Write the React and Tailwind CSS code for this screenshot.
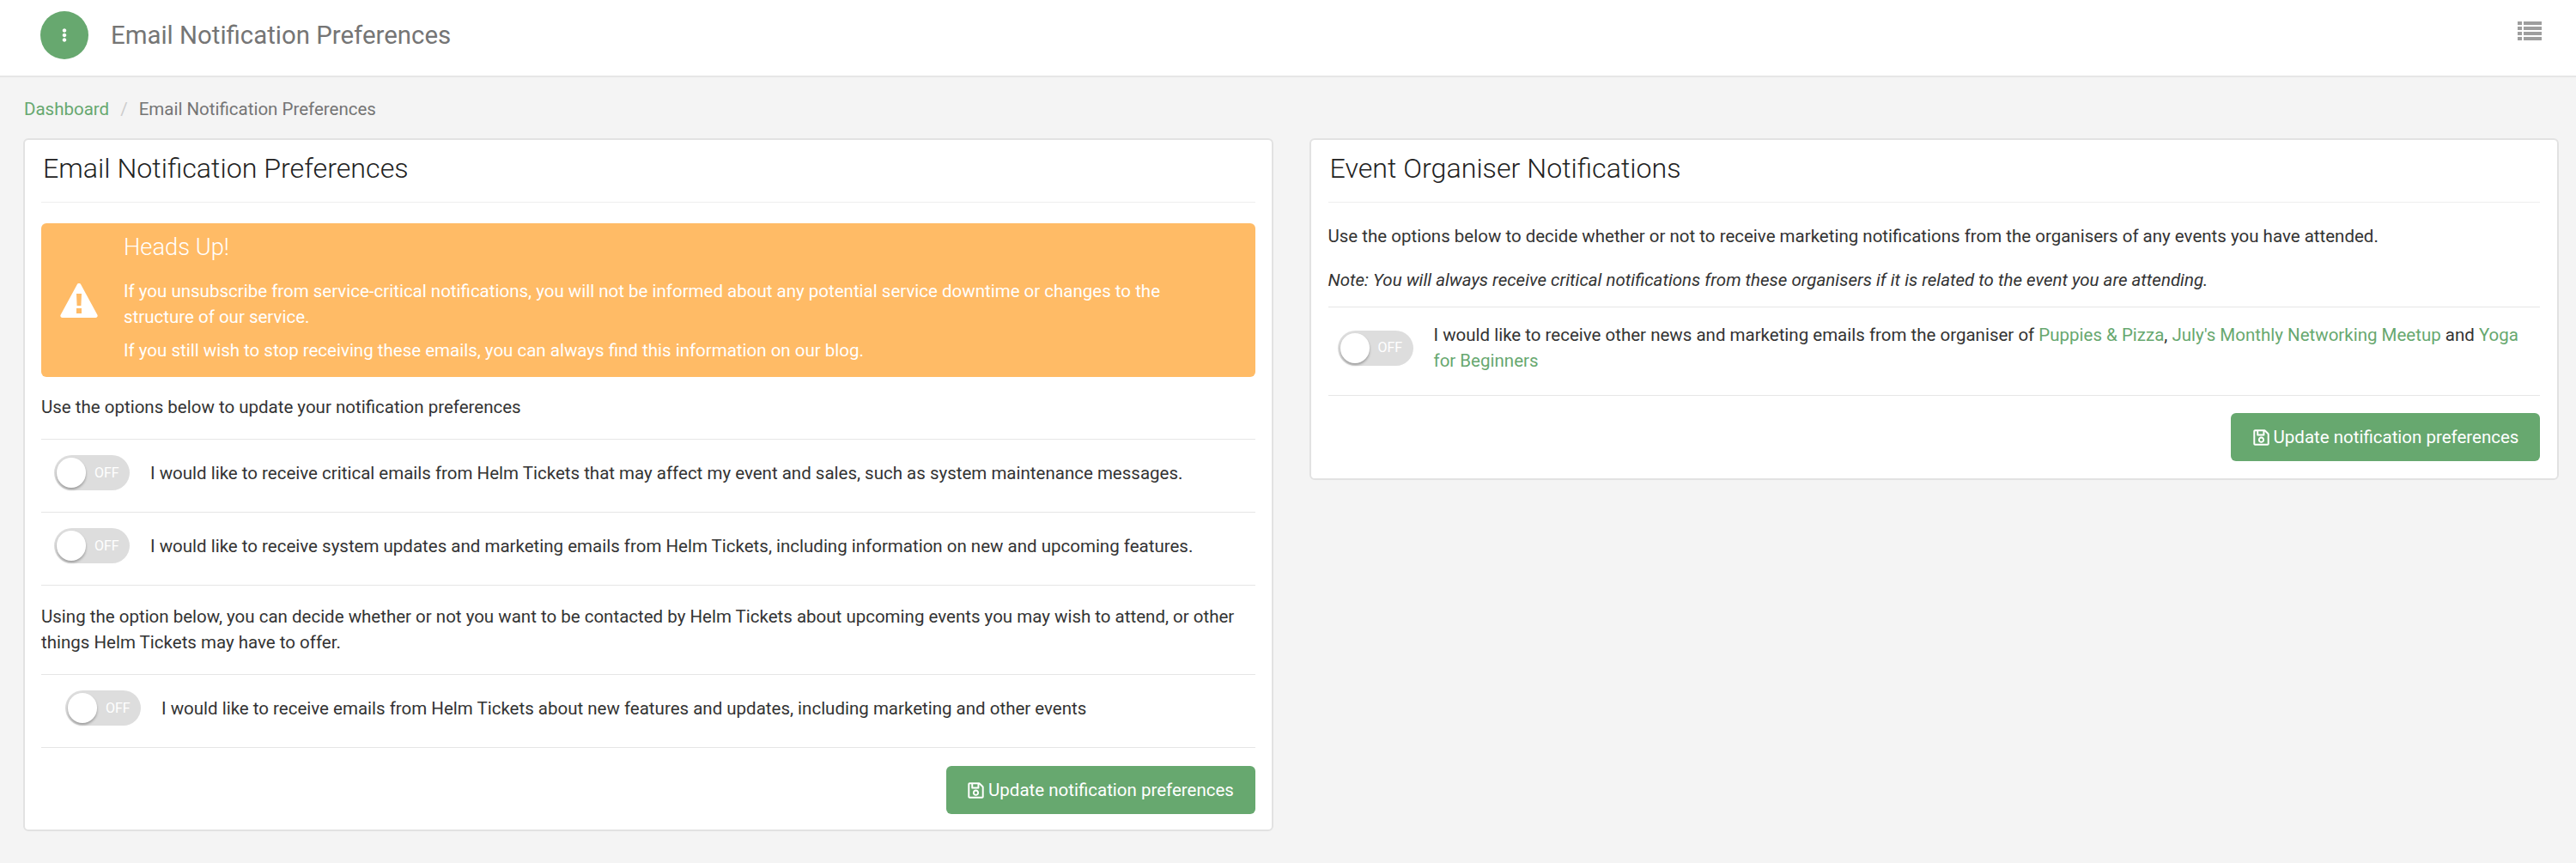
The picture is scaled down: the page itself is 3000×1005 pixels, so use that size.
import React from 'react';
import { FaRegSave, FaEllipsisV } from 'react-icons/fa';

function Toggle() {
  return (
    <div className="relative flex h-[41px] w-[88px] shrink-0 items-center rounded-full bg-[#dddddd]">
      <div className="absolute top-[3px] left-[3px] h-[35px] w-[34px] rounded-full bg-white shadow-[0_2px_3px_rgba(0,0,0,0.3)]" />
      <span className="ml-[47px] text-[16px] leading-none text-white">OFF</span>
    </div>
  );
}

function SaveButton() {
  return (
    <div className="flex justify-end">
      <button className="flex h-[56px] w-[360px] items-center justify-center gap-[4px] rounded-[6px] bg-[#67a86f] text-[20.5px] text-white">
        <FaRegSave className="h-[21px] w-[21px]" />
        Update notification preferences
      </button>
    </div>
  );
}

function PanelTitle({ children }) {
  return (
    <div className="mb-[24px] border-b border-[#eeeeee] pt-[2px] pb-[20px] pl-[2px]">
      <h2 className="text-[32.2px] leading-[38px] font-light text-[#222222]">{children}</h2>
    </div>
  );
}

function ToggleRow({ children, indent }) {
  return (
    <div className={`flex h-[85px] items-center gap-[24px] border-b border-[#e6e6e6] pb-[7px] ${indent ? 'pl-[28px]' : 'pl-[15px]'}`}>
      <Toggle />
      <p>{children}</p>
    </div>
  );
}

function Link({ children }) {
  return <a className="text-[#67a86f]">{children}</a>;
}

export default function App() {
  return (
    <div className="min-h-[1005px] bg-[#f4f4f4] text-[20.5px] leading-[30px] text-[#333333]" style={{ fontFamily: 'Roboto, sans-serif' }}>
      <header className="flex h-[90px] items-center justify-between border-b-2 border-[#e6e6e6] bg-white pr-[40px] pb-[6px] pl-[47px]">
        <div className="flex items-center gap-[26px]">
          <div className="flex h-[56px] w-[56px] items-center justify-center rounded-full bg-[#67a86f] text-white">
            <FaEllipsisV className="h-[16px] w-[16px]" />
          </div>
          <h1 className="text-[29.4px] font-normal text-[#757575]">Email Notification Preferences</h1>
        </div>
        <svg viewBox="0 0 28 22" className="mb-[10px] h-[22px] w-[28px]" fill="#9e9e9e">
          <rect x="0" y="0" width="5" height="4" />
          <rect x="7" y="0" width="21" height="4" />
          <rect x="0" y="6" width="5" height="4" />
          <rect x="7" y="6" width="21" height="4" />
          <rect x="0" y="12" width="5" height="4" />
          <rect x="7" y="12" width="21" height="4" />
          <rect x="0" y="18" width="5" height="4" />
          <rect x="7" y="18" width="21" height="4" />
        </svg>
      </header>

      <nav className="flex h-[71px] items-center pt-[3px] pl-[28px] text-[#757575]">
        <a className="text-[#67a86f]">Dashboard</a>
        <span className="mx-[13px] text-[#cccccc]">/</span>
        <span>Email Notification Preferences</span>
      </nav>

      <div className="grid grid-cols-2 items-start gap-[42px] pr-[20px] pl-[27px]">
        <section className="rounded-[6px] border-2 border-[#e2e2e2] bg-white px-[19px] pt-[12px] pb-[18px]">
          <PanelTitle>Email Notification Preferences</PanelTitle>
          <div className="flex h-[179px] items-center rounded-[6px] bg-[#ffbb66] pl-[22px] text-white">
            <svg viewBox="0 0 44 40" className="h-[40px] w-[44px] shrink-0" fill="currentColor">
              <path fillRule="evenodd" d="M22 0c1 0 1.8.5 2.3 1.4l19 35c1 1.800 0 3.600-2 3.600H2.700c-2 0-3-1.800-2-3.600l19-35C20.200.5 21 0 22 0ZM19 12l.6 14h4.800l.6-14h-6Zm0 17v6h6v-6h-6Z" />
            </svg>
            <div className="mb-[3px] ml-[30px] self-start pt-[13px]">
              <h4 className="mb-[21px] text-[27.3px] leading-[30px] font-light">Heads Up!</h4>
              <p>If you unsubscribe from service-critical notifications, you will not be informed about any potential service downtime or changes to the<br />structure of our service.</p>
              <p className="mt-[9px]">If you still wish to stop receiving these emails, you can always find this information on our blog.</p>
            </div>
          </div>
          <p className="mt-[20px] mb-[22px]">Use the options below to update your notification preferences</p>
          <div className="border-t border-[#e6e6e6]">
            <ToggleRow>I would like to receive critical emails from Helm Tickets that may affect my event and sales, such as system maintenance messages.</ToggleRow>
            <ToggleRow>I would like to receive system updates and marketing emails from Helm Tickets, including information on new and upcoming features.</ToggleRow>
          </div>
          <p className="pt-[21px] pb-[22px]">Using the option below, you can decide whether or not you want to be contacted by Helm Tickets about upcoming events you may wish to attend, or other things Helm Tickets may have to offer.</p>
          <div className="border-t border-[#e6e6e6]">
            <ToggleRow indent>I would like to receive emails from Helm Tickets about new features and updates, including marketing and other events</ToggleRow>
          </div>
          <div className="mt-[21px]">
            <SaveButton />
          </div>
        </section>

        <section className="rounded-[6px] border-2 border-[#e2e2e2] bg-white px-[20px] pt-[12px] pb-[20px]">
          <PanelTitle>Event Organiser Notifications</PanelTitle>
          <p>Use the options below to decide whether or not to receive marketing notifications from the organisers of any events you have attended.</p>
          <p className="mt-[21px] mb-[16px] italic">Note: You will always receive critical notifications from these organisers if it is related to the event you are attending.</p>
          <div className="flex h-[104px] items-center gap-[24px] border-y border-[#e6e6e6] pb-[8px] pl-[11px]">
            <Toggle />
            <p>
              I would like to receive other news and marketing emails from the organiser of <Link>Puppies &amp; Pizza</Link>, <Link>July's Monthly Networking Meetup</Link> and <Link>Yoga for Beginners</Link>
            </p>
          </div>
          <div className="mt-[20px]">
            <SaveButton />
          </div>
        </section>
      </div>
    </div>
  );
}
